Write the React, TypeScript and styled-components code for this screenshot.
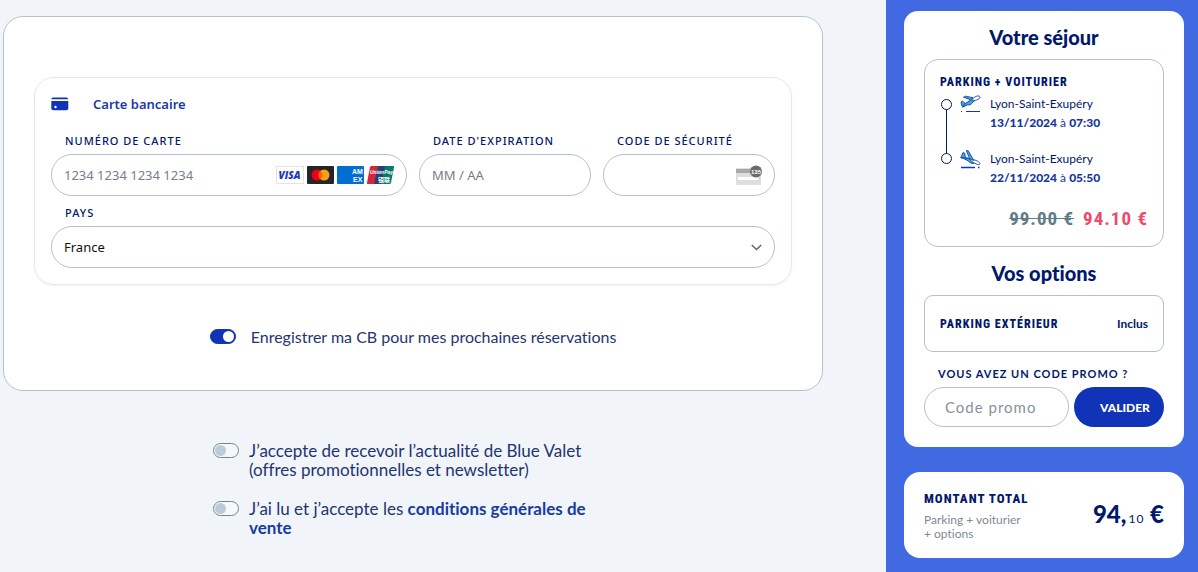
import React from "react";
import styled, { createGlobalStyle } from "styled-components";

const navy = "#02186b";
const royal = "#1133b8";
const line = "#b4c2cb";
const sans = '"Lato", "Open Sans", sans-serif';
const formSans = '"Noto Sans", "Open Sans", sans-serif';
const narrow = '"Roboto Condensed", "Roboto", sans-serif';

const GlobalStyle = createGlobalStyle`
  * { box-sizing: border-box; }
  body { margin: 0; background: #f1f5f9; color: ${navy}; font-family: ${sans}; font-variant-ligatures: none; }
  h2, h3, p, ol { margin: 0; padding: 0; }
  input, select, button { font: inherit; color: inherit; }
`;

const Page = styled.div`
  display: flex;
  min-height: 100vh;
`;

const Main = styled.main`
  flex: 1;
  min-width: 0;
  padding: 16px 63px 16px 3px;
`;

const PaymentPanel = styled.section`
  background: #fff;
  border: 1px solid ${line};
  border-radius: 20px;
  padding: 60px 30px 44px;
`;

const CardForm = styled.div`
  border: 1px solid #e6e8ea;
  border-radius: 20px;
  padding: 16px;
  box-shadow: 0 1px 2px rgba(0, 0, 0, 0.06);
  font-family: ${formSans};
`;

const MethodTitle = styled.h3`
  display: flex;
  align-items: center;
  gap: 24px;
  height: 20px;
  margin-bottom: 18px;
  color: #1c3aa9;
  font-size: 13px;
  line-height: 20px;
  font-weight: 600;
`;

const FieldGrid = styled.div`
  display: grid;
  grid-template-columns: repeat(4, minmax(0, 1fr));
  gap: 8px 12px;
`;

const Field = styled.div<{ $span?: number }>`
  grid-column: span ${(p) => p.$span ?? 1};
`;

const FieldLabel = styled.label`
  display: block;
  padding-left: 14px;
  margin-bottom: 5px;
  font-size: 11px;
  line-height: 17px;
  font-weight: 500;
  letter-spacing: 1px;
  text-transform: uppercase;
`;

const FieldBox = styled.div`
  display: flex;
  align-items: center;
  height: 42px;
  padding: 0 12px;
  border: 1px solid ${line};
  border-radius: 21px;
  background: #fff;
`;

const FieldInput = styled.input`
  flex: 1;
  min-width: 0;
  height: 100%;
  padding: 0;
  border: 0;
  outline: 0;
  background: none;
  font-size: 13px;
  &::placeholder { color: #74808a; opacity: 1; }
`;

const CountrySelect = styled.select`
  flex: 1;
  height: 100%;
  padding: 0;
  border: 0;
  outline: 0;
  appearance: none;
  background: none;
  color: #111;
  font-size: 13px;
`;

const Brands = styled.div`
  display: flex;
  gap: 3px;
`;

const Switch = styled.input.attrs({ type: "checkbox", role: "switch" })`
  appearance: none;
  flex: none;
  display: flex;
  align-items: center;
  width: 26px;
  height: 15px;
  margin: 0;
  padding: 0 1px;
  border: 1px solid #73868f;
  border-radius: 8px;
  background: #f5f8fa;
  &::before {
    content: "";
    width: 11px;
    height: 11px;
    border-radius: 50%;
    background: #bccbd7;
  }
  &:checked {
    justify-content: flex-end;
    border-color: ${royal};
    background: ${royal};
  }
  &:checked::before { background: #fff; }
`;

const SaveRow = styled.div`
  display: flex;
  align-items: center;
  justify-content: center;
  gap: 15px;
  margin-top: 42px;
  color: #233472;
  font-size: 16px;
  line-height: 19px;
`;

const Terms = styled.div`
  display: flex;
  flex-direction: column;
  gap: 20px;
  max-width: 400px;
  margin: 50px auto 0;
`;

const TermRow = styled.div`
  display: flex;
  gap: 10px;
  color: #233472;
  font-size: 17px;
  line-height: 19px;
  & > input { margin-top: 2px; }
`;

const TermLabel = styled.label`
  max-width: 350px;
`;

const TermLink = styled.a`
  color: #173ba0;
  font-weight: 700;
  text-decoration: none;
`;

const Sidebar = styled.aside`
  flex: none;
  width: 312px;
  padding: 11px 14px 12px 18px;
  background: #4169e1;
`;

const SideCard = styled.section`
  padding: 12px 20px 20px;
  border-radius: 14px;
  background: #fff;
`;

const SideTitle = styled.h2<{ $spaced?: boolean }>`
  margin: ${(p) => (p.$spaced ? "12px 0 8px" : "0 0 8px")};
  font-size: 20px;
  line-height: 28px;
  font-weight: 900;
  text-align: center;
`;

const StayBox = styled.div`
  padding: 14px 15px;
  border: 1px solid ${line};
  border-radius: 14px;
`;

const CapsTitle = styled.h3<{ $size?: number }>`
  font-family: ${narrow};
  font-size: ${(p) => p.$size ?? 12}px;
  line-height: 16px;
  font-weight: 800;
  letter-spacing: 1px;
  text-transform: uppercase;
`;

const Itinerary = styled.div`
  display: flex;
  gap: 7px;
  margin-top: 4px;
`;

const Track = styled.svg`
  flex: none;
  margin-top: 4px;
`;

const Legs = styled.ol`
  display: flex;
  flex-direction: column;
  gap: 17px;
  list-style: none;
`;

const Leg = styled.li`
  display: flex;
  gap: 9px;
  font-size: 12px;
  line-height: 19px;
`;

const LegDate = styled.p`
  color: #16379c;
  & > strong { font-weight: 900; }
`;

const Prices = styled.p`
  display: flex;
  justify-content: flex-end;
  gap: 9px;
  margin-top: 19px;
  font-family: ${narrow};
  font-size: 19px;
  line-height: 26px;
  font-weight: 700;
  letter-spacing: 1px;
  color: #ec4b6c;
  & > del { color: #607d86; }
`;

const OptionBox = styled.div`
  display: flex;
  align-items: center;
  justify-content: space-between;
  height: 57px;
  padding: 0 15px;
  border: 1px solid ${line};
  border-radius: 9px;
`;

const Included = styled.span`
  font-size: 12px;
  font-weight: 700;
`;

const PromoLabel = styled.label`
  display: block;
  margin: 13px 0 5px;
  padding-left: 14px;
  font-size: 11px;
  line-height: 17px;
  font-weight: 700;
  letter-spacing: 1px;
  text-transform: uppercase;
`;

const PromoRow = styled.form`
  display: flex;
  gap: 5px;
`;

const PromoInput = styled.input`
  flex: 1;
  min-width: 0;
  height: 40px;
  padding: 0 20px;
  border: 1px solid ${line};
  border-radius: 20px;
  background: #fff;
  font-size: 15px;
  letter-spacing: 1px;
  &::placeholder { color: #84939a; opacity: 1; }
`;

const SubmitButton = styled.button`
  width: 90px;
  height: 40px;
  padding: 0 13px 0 25px;
  border: 0;
  border-radius: 20px;
  background: ${royal};
  color: #fff;
  font-size: 12px;
  font-weight: 900;
`;

const TotalCard = styled.section`
  display: flex;
  align-items: center;
  justify-content: space-between;
  margin-top: 25px;
  padding: 19px 20px 17px;
  border-radius: 16px;
  background: #fff;
`;

const TotalDetail = styled.p`
  margin-top: 6px;
  color: #7d8a93;
  font-size: 12px;
  line-height: 14px;
`;

const TotalAmount = styled.p`
  font-size: 24px;
  line-height: 31px;
  font-weight: 900;
  white-space: nowrap;
  & > small { margin-left: 2px; font-size: 12px; font-weight: 400; letter-spacing: 1px; }
`;

const CardGlyph = () => (
  <svg width="18" height="14" viewBox="0 0 18 14" aria-hidden="true">
    <path d="M2 .5h13.500a2 2 0 0 1 1.700 1.700H.3A2 2 0 0 1 2 .5z" fill={royal} />
    <path d="M.3 4h17v7.300a2 2 0 0 1-2 2h-13a2 2 0 0 1-2-2z" fill={royal} />
    <circle cx="4.500" cy="10" r="1.200" fill="#fff" />
  </svg>
);

const Visa = () => (
  <svg width="28" height="18" viewBox="0 0 28 18" role="img" aria-label="Visa">
    <rect x=".5" y=".5" width="27" height="17" fill="#fff" stroke="#e1e3e6" />
    <text x="13.500" y="13" textAnchor="middle" fontFamily="Open Sans, sans-serif" fontSize="10" fontWeight="800" fontStyle="italic" fill="#2337c4">VISA</text>
  </svg>
);

const Mastercard = () => (
  <svg width="27" height="18" viewBox="0 0 27 18" role="img" aria-label="Mastercard">
    <rect width="27" height="18" rx="1" fill="#252525" />
    <circle cx="10" cy="9" r="5.500" fill="#eb001b" />
    <circle cx="17" cy="9" r="5.500" fill="#f79e1b" />
    <path d="M13.500 4.800a5.500 5.500 0 0 1 0 8.400 5.500 5.500 0 0 1 0-8.400z" fill="#ff5f00" />
  </svg>
);

const Amex = () => (
  <svg width="27" height="18" viewBox="0 0 27 18" role="img" aria-label="American Express">
    <rect width="27" height="18" rx="1" fill="#016fd0" />
    <g fontFamily="Liberation Sans, sans-serif" fontSize="7" fontWeight="700" fill="#fff">
      <text x="15" y="8">AM</text>
      <text x="16" y="16">EX</text>
    </g>
  </svg>
);

const UnionPay = () => (
  <svg width="27" height="18" viewBox="0 0 27 18" role="img" aria-label="UnionPay">
    <path d="M4 0h8L8 18H1a1 1 0 0 1-1-1.200L3 1z" fill="#d3263a" />
    <path d="M11 0h8l-4 18H7z" fill="#214375" />
    <path d="M18 0h8a1 1 0 0 1 1 1.200l-3 15.600a1.500 1.500 0 0 1-1.500 1.200H14z" fill="#087a6d" />
    <g fill="#fff" fontWeight="700">
      <text x="3" y="8" fontFamily="Liberation Sans, sans-serif" fontSize="5" fontStyle="italic">UnionPay</text>
      <text x="11" y="16" fontFamily="Noto Sans CJK SC, sans-serif" fontSize="6">银联</text>
    </g>
  </svg>
);

const CvcGlyph = () => (
  <svg width="27" height="21" viewBox="0 0 27 21" role="img" aria-label="Cryptogramme">
    <rect x="1" y="3" width="25" height="17" rx="1" fill="#dedede" />
    <rect x="1" y="4" width="25" height="4" fill="#a9a9ab" />
    <rect x="3" y="12" width="20" height="3" fill="#fff" />
    <circle cx="21" cy="6.500" r="6" fill="#6b6b6d" />
    <text x="21" y="9" textAnchor="middle" fontFamily="Liberation Sans, sans-serif" fontSize="6" fontWeight="700" fill="#fff">135</text>
  </svg>
);

const Chevron = () => (
  <svg width="11" height="8" viewBox="0 0 11 8" fill="none" stroke="#5f6468" strokeWidth="1.500" aria-hidden="true">
    <path d="M.8 2l4.700 4.500L10.200 2" />
  </svg>
);

const TakeOff = () => (
  <svg width="21" height="19" viewBox="0 0 21 19" aria-hidden="true">
    <g fill="#45a5ea" stroke="#164a9c" strokeWidth=".9" strokeLinejoin="round">
      <path d="M3.500 3.200l2-1 7.500 1.500-2.500 2z" />
      <path d="M1 8l1.500-.8 2.500 2-1.500 3.300-1.800-.8z" />
      <path d="M3.800 12.500L6 9.500l8.500-6.200C17.500 1 21 1.800 19.800 4c-.9 1.500-2.800 1.700-4.300 2.300L8.500 10z" fill="#fff" />
      <path d="M2.500 13.300l2-3.300 7-4.300 3 .8-4.300 4.500-3-.2z" />
    </g>
    <path d="M1 17.500h1M6 17.500h14" stroke="#153b98" strokeWidth="1.200" />
  </svg>
);

const Landing = () => (
  <svg width="21" height="21" viewBox="0 0 21 21" aria-hidden="true">
    <g fill="#45a5ea" stroke="#164a9c" strokeWidth=".9" strokeLinejoin="round">
      <path d="M.8 8.800L3 3.500l1.800.7.700 5.200z" />
      <path d="M.8 8.500l6 .3 8 2.200 2.500 1c3.500 1.500 3.500 4.200.2 3.500L9.500 12z" fill="#fff" />
      <path d="M6.300 1.500l2 .3 5.500 9.700-4-1.500z" />
      <path d="M4.500 9.300l4 .2 5.500 5-3-.3z" />
    </g>
    <path d="M1 18.500h14M18 18.500h1.500" stroke="#153b98" strokeWidth="1.500" />
  </svg>
);

const legs = [
  { icon: <TakeOff />, place: "Lyon-Saint-Exupéry", date: "13/11/2024", time: "07:30" },
  { icon: <Landing />, place: "Lyon-Saint-Exupéry", date: "22/11/2024", time: "05:50" },
];

export default function App() {
  return (
    <Page>
      <GlobalStyle />
      <Main>
        <PaymentPanel>
          <CardForm>
            <MethodTitle><CardGlyph />Carte bancaire</MethodTitle>
            <FieldGrid>
              <Field $span={2}>
                <FieldLabel htmlFor="number">Numéro de carte</FieldLabel>
                <FieldBox>
                  <FieldInput id="number" placeholder="1234 1234 1234 1234" />
                  <Brands><Visa /><Mastercard /><Amex /><UnionPay /></Brands>
                </FieldBox>
              </Field>
              <Field>
                <FieldLabel htmlFor="expiry">Date d'expiration</FieldLabel>
                <FieldBox><FieldInput id="expiry" placeholder="MM / AA" /></FieldBox>
              </Field>
              <Field>
                <FieldLabel htmlFor="cvc">Code de sécurité</FieldLabel>
                <FieldBox><FieldInput id="cvc" /><CvcGlyph /></FieldBox>
              </Field>
              <Field $span={4}>
                <FieldLabel htmlFor="country">Pays</FieldLabel>
                <FieldBox>
                  <CountrySelect id="country" defaultValue="FR">
                    <option value="FR">France</option>
                  </CountrySelect>
                  <Chevron />
                </FieldBox>
              </Field>
            </FieldGrid>
          </CardForm>
          <SaveRow>
            <Switch id="save" defaultChecked />
            <label htmlFor="save">Enregistrer ma CB pour mes prochaines réservations</label>
          </SaveRow>
        </PaymentPanel>
        <Terms>
          <TermRow>
            <Switch id="news" />
            <TermLabel htmlFor="news">J’accepte de recevoir l’actualité de Blue Valet (offres promotionnelles et newsletter)</TermLabel>
          </TermRow>
          <TermRow>
            <Switch id="terms" />
            <TermLabel htmlFor="terms">J’ai lu et j’accepte les <TermLink href="#conditions">conditions générales de vente</TermLink></TermLabel>
          </TermRow>
        </Terms>
      </Main>
      <Sidebar>
        <SideCard>
          <SideTitle>Votre séjour</SideTitle>
          <StayBox>
            <CapsTitle>Parking + voiturier</CapsTitle>
            <Itinerary>
              <Track width="13" height="67" viewBox="0 0 13 67" fill="none" stroke={navy} aria-hidden="true">
                <circle cx="6.500" cy="6.500" r="5" />
                <path d="M6.500 11.500v44" />
                <circle cx="6.500" cy="60.500" r="5" />
              </Track>
              <Legs>
                {legs.map((leg) => (
                  <Leg key={leg.date}>
                    {leg.icon}
                    <div>
                      <p>{leg.place}</p>
                      <LegDate><strong>{leg.date}</strong> à <strong>{leg.time}</strong></LegDate>
                    </div>
                  </Leg>
                ))}
              </Legs>
            </Itinerary>
            <Prices><del>99.00 €</del><span>94.10 €</span></Prices>
          </StayBox>
          <SideTitle $spaced>Vos options</SideTitle>
          <OptionBox>
            <CapsTitle>Parking extérieur</CapsTitle>
            <Included>Inclus</Included>
          </OptionBox>
          <PromoLabel htmlFor="promo">Vous avez un code promo ?</PromoLabel>
          <PromoRow onSubmit={(e) => e.preventDefault()}>
            <PromoInput id="promo" placeholder="Code promo" />
            <SubmitButton type="submit">VALIDER</SubmitButton>
          </PromoRow>
        </SideCard>
        <TotalCard>
          <div>
            <CapsTitle $size={13}>Montant total</CapsTitle>
            <TotalDetail>Parking + voiturier<br />+ options</TotalDetail>
          </div>
          <TotalAmount>94,<small>10</small> €</TotalAmount>
        </TotalCard>
      </Sidebar>
    </Page>
  );
}
